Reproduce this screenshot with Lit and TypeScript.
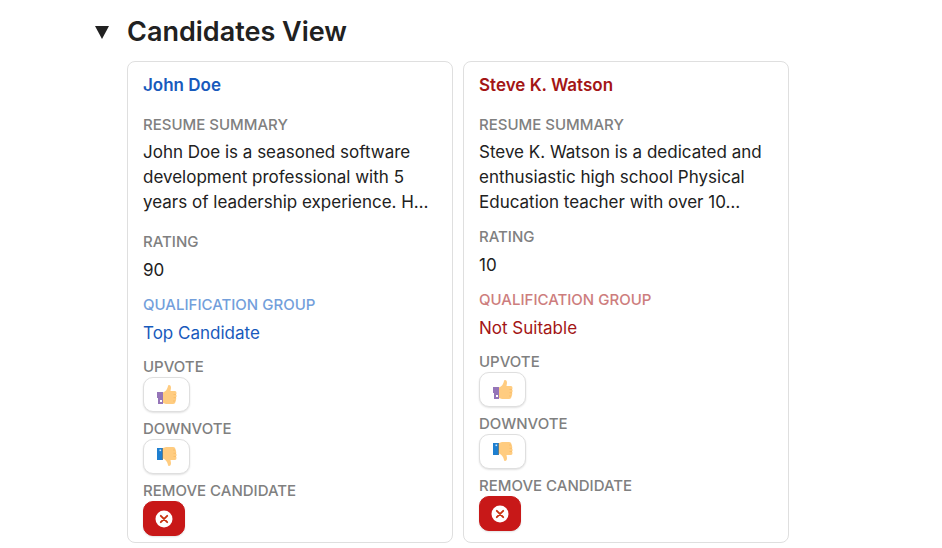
import { LitElement, html, css, svg, nothing } from "lit";
import { customElement, property, state } from "lit/decorators.js";
import { classMap } from "lit/directives/class-map.js";

interface Candidate {
  name: string;
  summary: string;
  rating: number;
  group: string;
  tone: "blue" | "red";
}

const candidates: Candidate[] = [
  {
    name: "John Doe",
    summary:
      "John Doe is a seasoned software development professional with 5 years of leadership experience. H…",
    rating: 90,
    group: "Top Candidate",
    tone: "blue",
  },
  {
    name: "Steve K. Watson",
    summary:
      "Steve K. Watson is a dedicated and enthusiastic high school Physical Education teacher with over 10…",
    rating: 10,
    group: "Not Suitable",
    tone: "red",
  },
];

const hand = svg`
  <path fill="#ffcc80" d="M6 7.500 Q10 6 11 1 Q11 0 12 0 Q14 0 14 3 L13.500 6 H18 Q19.500 6 19.500 8 Q19.500 9 19 9.500 Q19.800 10 19.500 11.500 Q19.500 12 19 12.500 Q19.500 13.500 19 15 Q19 15.500 18.500 16 Q18.500 19 16 19 H9 L6 18 Z"/>
  <path fill="none" stroke="#f5b65c" stroke-width=".6" d="M16.500 9.500h2.500M16.500 12.700h2.500M16 16h2.500"/>`;

const thumbUp = html`<svg class="thumb" viewBox="0 0 20 20" aria-hidden="true">
  ${hand}
  <path fill="#9575b8" d="M0 7h6v12H1V13H0z" />
  <rect x="3" y="15" width="2" height="2" fill="#fff" />
</svg>`;

const thumbDown = html`<svg class="thumb" viewBox="0 0 20 20" aria-hidden="true">
  <g transform="matrix(1 0 0 -1 0 19)">${hand}</g>
  <rect y="1" width="6" height="12" fill="#1e7fd0" />
  <rect x="5" y="1" width="1" height="12" fill="#607d8b" />
  <rect x="2.500" y="2.500" width="1.600" height="1.600" fill="#cfe6fa" />
</svg>`;

const cross = html`<svg class="cross" viewBox="0 0 18 18" aria-hidden="true">
  <circle cx="9" cy="9" r="8.500" fill="#fff" />
  <path d="M5.800 5.800l6.400 6.400M12.200 5.800l-6.400 6.400" stroke="#c8320f" stroke-width="1.900" stroke-linecap="round" />
</svg>`;

@customElement("candidate-card")
export class CandidateCard extends LitElement {
  @property({ attribute: false }) candidate!: Candidate;

  static styles = css`
    :host {
      display: block;
      box-sizing: border-box;
      padding: 11px 15px 6px;
      border: 1px solid #dfdfdf;
      border-radius: 8px;
      background: #fff;
      color: #212121;
    }
    .name {
      margin: 0 0 18px;
      font-size: 17px;
      font-weight: 600;
      line-height: 24px;
    }
    .blue { color: #185abc; }
    .red { color: #a31515; }
    .list { margin: 0; display: flex; flex-direction: column; gap: 12px; }
    .actions { margin: 11px 0 0; display: flex; flex-direction: column; gap: 7px; }
    .summary-blue { padding-bottom: 5px; }
    .label {
      font-size: 15px;
      font-weight: 500;
      line-height: 20px;
      color: #808080;
    }
    .label-blue { color: #739fdb; }
    .label-red { color: #cd7d7d; }
    .value {
      margin: 5px 0 0;
      font-size: 17px;
      font-weight: 400;
      line-height: 26px;
    }
    .text { line-height: 25px; }
    .button {
      display: flex;
      align-items: center;
      justify-content: center;
      box-sizing: border-box;
      width: 47px;
      height: 35px;
      padding: 0;
      border: 1px solid #dfdfdf;
      border-radius: 10px;
      background: #fff;
      box-shadow: 0 1px 2px rgb(0 0 0 / 12%);
      cursor: pointer;
    }
    .danger { width: 42px; border-color: #c81818; background: #c81818; }
    .thumb { width: 20px; height: 20px; }
    .cross { width: 18px; height: 18px; }
  `;

  render() {
    const { name, summary, rating, group, tone } = this.candidate;
    return html`
      <h2 class="name ${tone}">${name}</h2>
      <dl class="list">
        <div class="summary-${tone}">
          <dt class="label">RESUME SUMMARY</dt>
          <dd class="value text">${summary}</dd>
        </div>
        <div>
          <dt class="label">RATING</dt>
          <dd class="value">${rating}</dd>
        </div>
        <div>
          <dt class="label label-${tone}">QUALIFICATION GROUP</dt>
          <dd class="value ${tone}">${group}</dd>
        </div>
      </dl>
      <div class="actions">
        ${this.action("up", "UPVOTE", thumbUp)}
        ${this.action("down", "DOWNVOTE", thumbDown)}
        ${this.action("remove", "REMOVE CANDIDATE", cross, true)}
      </div>
    `;
  }

  private action(id: string, label: string, icon: unknown, danger = false) {
    return html`<div>
      <div class="label" id=${id}>${label}</div>
      <button type="button" class=${classMap({ button: true, danger })} aria-labelledby=${id}>${icon}</button>
    </div>`;
  }
}

@customElement("app-root")
export class AppRoot extends LitElement {
  @state() private open = true;

  static styles = css`
    :host {
      display: block;
      box-sizing: border-box;
      min-height: 100vh;
      padding: 14px 153px 5px 87px;
      background: #fff;
      font-family: Inter, "Liberation Sans", sans-serif;
    }
    .header { display: flex; align-items: center; gap: 10px; }
    .toggle {
      display: grid;
      place-items: center;
      width: 30px;
      height: 30px;
      padding: 0;
      border: 0;
      background: none;
      cursor: pointer;
    }
    .arrow { width: 14px; height: 13px; }
    .closed { transform: rotate(-90deg); }
    .title {
      margin: 0;
      font-size: 27px;
      font-weight: 600;
      line-height: 36px;
      color: #212121;
    }
    .cards {
      display: grid;
      grid-template-columns: repeat(auto-fit, minmax(280px, 1fr));
      gap: 10px;
      margin: 11px 0 0 40px;
    }
  `;

  render() {
    return html`
      <header class="header">
        <button
          type="button"
          class="toggle"
          aria-label="Toggle section"
          aria-expanded=${this.open}
          @click=${() => (this.open = !this.open)}
        >
          <svg class=${classMap({ arrow: true, closed: !this.open })} viewBox="0 0 14 13" aria-hidden="true">
            <path d="M0 0h14L7 13z" fill="#212121" />
          </svg>
        </button>
        <h1 class="title">Candidates View</h1>
      </header>
      ${this.open
        ? html`<main class="cards">
            ${candidates.map((c) => html`<candidate-card .candidate=${c}></candidate-card>`)}
          </main>`
        : nothing}
    `;
  }
}
